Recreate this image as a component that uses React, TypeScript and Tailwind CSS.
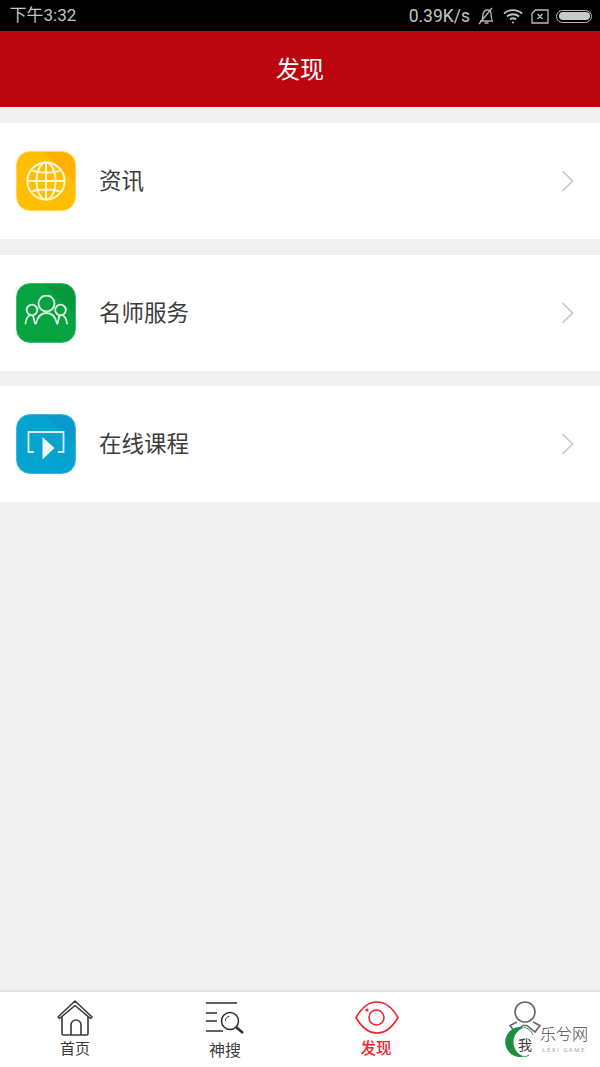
import type { ReactNode } from 'react';

const cjk = "font-['Roboto','Noto_Sans_CJK_SC',sans-serif]";

function GlobeIcon() {
  return (
    <svg width="40" height="40" viewBox="0 0 40 40" fill="none" stroke="#fff6da" strokeWidth="2">
      <circle cx="20" cy="20" r="18.6" />
      <ellipse cx="20" cy="20" rx="9.5" ry="18.6" />
      <path d="M20 1.4v37.2M1.4 20h37.2M5 9c6 3.500 24 3.500 30 0M5 31c6-3.500 24-3.500 30 0" />
    </svg>
  );
}

function PeopleIcon() {
  return (
    <svg width="44" height="36" viewBox="0 0 44 36" fill="none" stroke="#dcf2e0" strokeWidth="1.800" strokeLinecap="round">
      <circle cx="22.500" cy="8.500" r="8" />
      <circle cx="8" cy="15" r="5.300" />
      <circle cx="36.500" cy="15" r="5.300" />
      <path d="M12 28.500c1.500-6.500 5.500-10.500 10.500-10.500s9 4 10.500 10.500" />
      <path d="M1.500 28.500c.5-4.500 2-7.500 5-8.500M9 20.500l2 8" />
      <path d="M43 28.500c-.5-4.500-2-7.500-5-8.500M35.500 20.500l-2 8" />
    </svg>
  );
}

function PlayIcon() {
  return (
    <svg width="38" height="31" viewBox="0 0 38 31" fill="none">
      <path d="M7 23H1.500V3h35v20H31" stroke="#d5eef7" strokeWidth="1.800" />
      <path d="M15.500 8l12 11-12 11.500z" fill="#eef9fc" />
    </svg>
  );
}

function Chevron() {
  return (
    <svg width="13" height="22" viewBox="0 0 13 22" fill="none" stroke="#c8c8c8" strokeWidth="1.700">
      <path d="M1.500 1L11.500 11 1.500 21" />
    </svg>
  );
}

const rows: { label: string; bg: string; icon: ReactNode }[] = [
  {
    label: '资讯',
    bg: 'bg-[linear-gradient(45deg,#ffbe00_74%,#ffb000_74%)] border-[#ffd65c]',
    icon: <GlobeIcon />,
  },
  {
    label: '名师服务',
    bg: 'bg-[linear-gradient(45deg,#07a341_74%,#07973c_74%)] border-[#3cbb6c]',
    icon: <PeopleIcon />,
  },
  {
    label: '在线课程',
    bg: 'bg-[linear-gradient(45deg,#05a3cf_74%,#0a99ca_74%)] border-[#3cb9dc]',
    icon: <PlayIcon />,
  },
];

function Row({ label, bg, icon }: { label: string; bg: string; icon: ReactNode }) {
  return (
    <div className="flex h-[116px] items-center bg-white pl-[15.500px] pr-[26px]">
      <div className={`flex h-[60px] w-[60px] items-center justify-center rounded-[14px] border ${bg}`}>{icon}</div>
      <span className="ml-[23.500px] mt-[2px] flex-1 text-[22.500px] text-[#3c3c3c]">{label}</span>
      <Chevron />
    </div>
  );
}

function StatusBar() {
  return (
    <div className="flex h-[31px] items-center justify-between bg-black pl-[9.500px] pr-[8px] pt-[1px] text-[#c4c4c4]">
      <span className="text-[17px]">下午3:32</span>
      <div className="flex items-center">
        <span className="text-[17.500px]">0.39K/s</span>
        <svg className="ml-[7px]" width="18" height="18" viewBox="0 0 18 18" fill="none" stroke="#b5b5b5" strokeWidth="1.300">
          <path d="M3 14h13M4.500 14c1.500-1.500 1-4 1.500-6.500C6.500 5 8.500 3 10.500 3c2 0 3.500 1.500 3.500 4 0 3 .5 5.500 1.500 7M7.500 16h4M2 17L15 1" />
        </svg>
        <svg className="ml-[8px]" width="20" height="16" viewBox="0 0 20 16" fill="none" stroke="#c4c4c4" strokeWidth="1.800">
          <path d="M1 5.500c5-4.500 13-4.500 18 0M4 8.500c3.500-3 8.500-3 12 0M7 11.500c1.800-1.500 4.200-1.500 6 0" />
          <circle cx="10" cy="14.500" r="1" fill="#c4c4c4" stroke="none" />
        </svg>
        <svg className="ml-[8px]" width="18" height="15" viewBox="0 0 18 15" fill="none" stroke="#bdbdbd" strokeWidth="1.300">
          <path d="M4.500 1H17v13H1V4.500zM6.500 5l5 5M11.500 5l-5 5" />
        </svg>
        <div className="ml-[7px] h-[13px] w-[36px] rounded-full border border-[#bdbdbd] p-[1.500px]">
          <div className="h-full w-full rounded-full bg-[#c9c9c9]" />
        </div>
      </div>
    </div>
  );
}

function Tab({ label, labelClass, icon }: { label: string; labelClass: string; icon: ReactNode }) {
  return (
    <div className="flex flex-1 flex-col items-center">
      <div className="flex h-[36px] items-start">{icon}</div>
      <span className={`leading-[20px] ${labelClass}`}>{label}</span>
    </div>
  );
}

export default function App() {
  return (
    <div className={`relative flex h-[1067px] w-[600px] flex-col overflow-hidden bg-[#f0f0f0] ${cjk}`}>
      <StatusBar />
      <header className="flex h-[76px] items-center justify-center bg-[#bb0510] pt-[2px] text-[24px] text-white">发现</header>

      <main className="flex flex-1 flex-col gap-[15.500px] pt-[16px]">
        {rows.map((r) => (
          <Row key={r.label} {...r} />
        ))}
      </main>

      <nav className="flex h-[77px] border-t-2 border-[#e2e2e2] bg-white pt-[8px]">
        <Tab
          label="首页"
          labelClass="mt-[3px] text-[15px] text-[#3c3c3c]"
          icon={
            <svg width="36" height="36" viewBox="0 0 36 36" fill="none" stroke="#3a3a3a" strokeWidth="1.600" strokeLinejoin="round">
              <path d="M1 17L18 1l17 16-1.500 1.500L18 5.500 2.500 18.500z" />
              <path d="M5 16v17.500c0 .8.500 1.500 1.300 1.500h23.400c.8 0 1.300-.7 1.300-1.500V16" />
              <path d="M14 35V25a5 5 0 0 1 10 0v10" />
            </svg>
          }
        />
        <Tab
          label="神搜"
          labelClass="mt-[5px] text-[16px] text-[#3c3c3c]"
          icon={
            <svg width="40" height="36" viewBox="0 0 40 36" fill="none" stroke="#2e2e2e" strokeWidth="1.500">
              <path d="M1 3h31M1 13h11M1 21h11M1 31h17" />
              <circle cx="25" cy="21" r="8.500" />
              <path d="M31 27l7 6" strokeWidth="2.400" />
              <path d="M20.500 21a4.500 4.500 0 0 1 4-4.500" strokeWidth="1" />
            </svg>
          }
        />
        <Tab
          label="发现"
          labelClass="mt-[3px] ml-[2px] text-[15.500px] font-medium text-[#f5222d]"
          icon={
            <svg className="ml-[4px]" width="44" height="36" viewBox="0 0 44 36" fill="none" stroke="#f5222d" strokeWidth="1.600">
              <path d="M1 17.500C7 7 14 2 22 2s15 5 21 15.500C37 28 30 33 22 33S7 28 1 17.500z" />
              <circle cx="21.500" cy="17.500" r="7.500" />
              <circle cx="12" cy="10" r="1.600" fill="#f5222d" stroke="none" />
            </svg>
          }
        />
        <Tab
          label="我"
          labelClass="-mt-[1px] text-[14px] text-[#3c3c3c]"
          icon={
            <svg width="36" height="36" viewBox="0 0 36 36" fill="none" stroke="#666" strokeWidth="1.600">
              <circle cx="18" cy="12" r="10" />
              <path d="M10 22l-7 3.500 5 6.500 8-6.500 4 0 8 6.500 5-6.500-7-3.500" />
            </svg>
          }
        />
      </nav>

      {/* watermark */}
      <div className="absolute left-[504px] top-[1026px] flex">
        <svg width="31" height="32" viewBox="0 0 31 32" fill="none">
          <path d="M20 1.500A15 15 0 1 0 20 30.500C14 28.500 9.500 23 9.500 16S14 4 20 1.500z" fill="#1f8f3f" />
          <path d="M20 1.500c4 .5 7.500 3.500 9 7.500" stroke="#1f8f3f" strokeWidth="1" />
          <path d="M20 30.500c2 0 3.500-.5 5-1.500" stroke="#1f8f3f" strokeWidth="1" />
        </svg>
        <div className="ml-[5px] flex flex-col items-center">
          <span className="text-[16px] font-light leading-[18px] text-[#444]">乐兮网</span>
          <span className="mt-[2px] text-[6px] leading-[8px] tracking-[1.500px] text-[#aaa]">LEXI GAME</span>
        </div>
      </div>
    </div>
  );
}
